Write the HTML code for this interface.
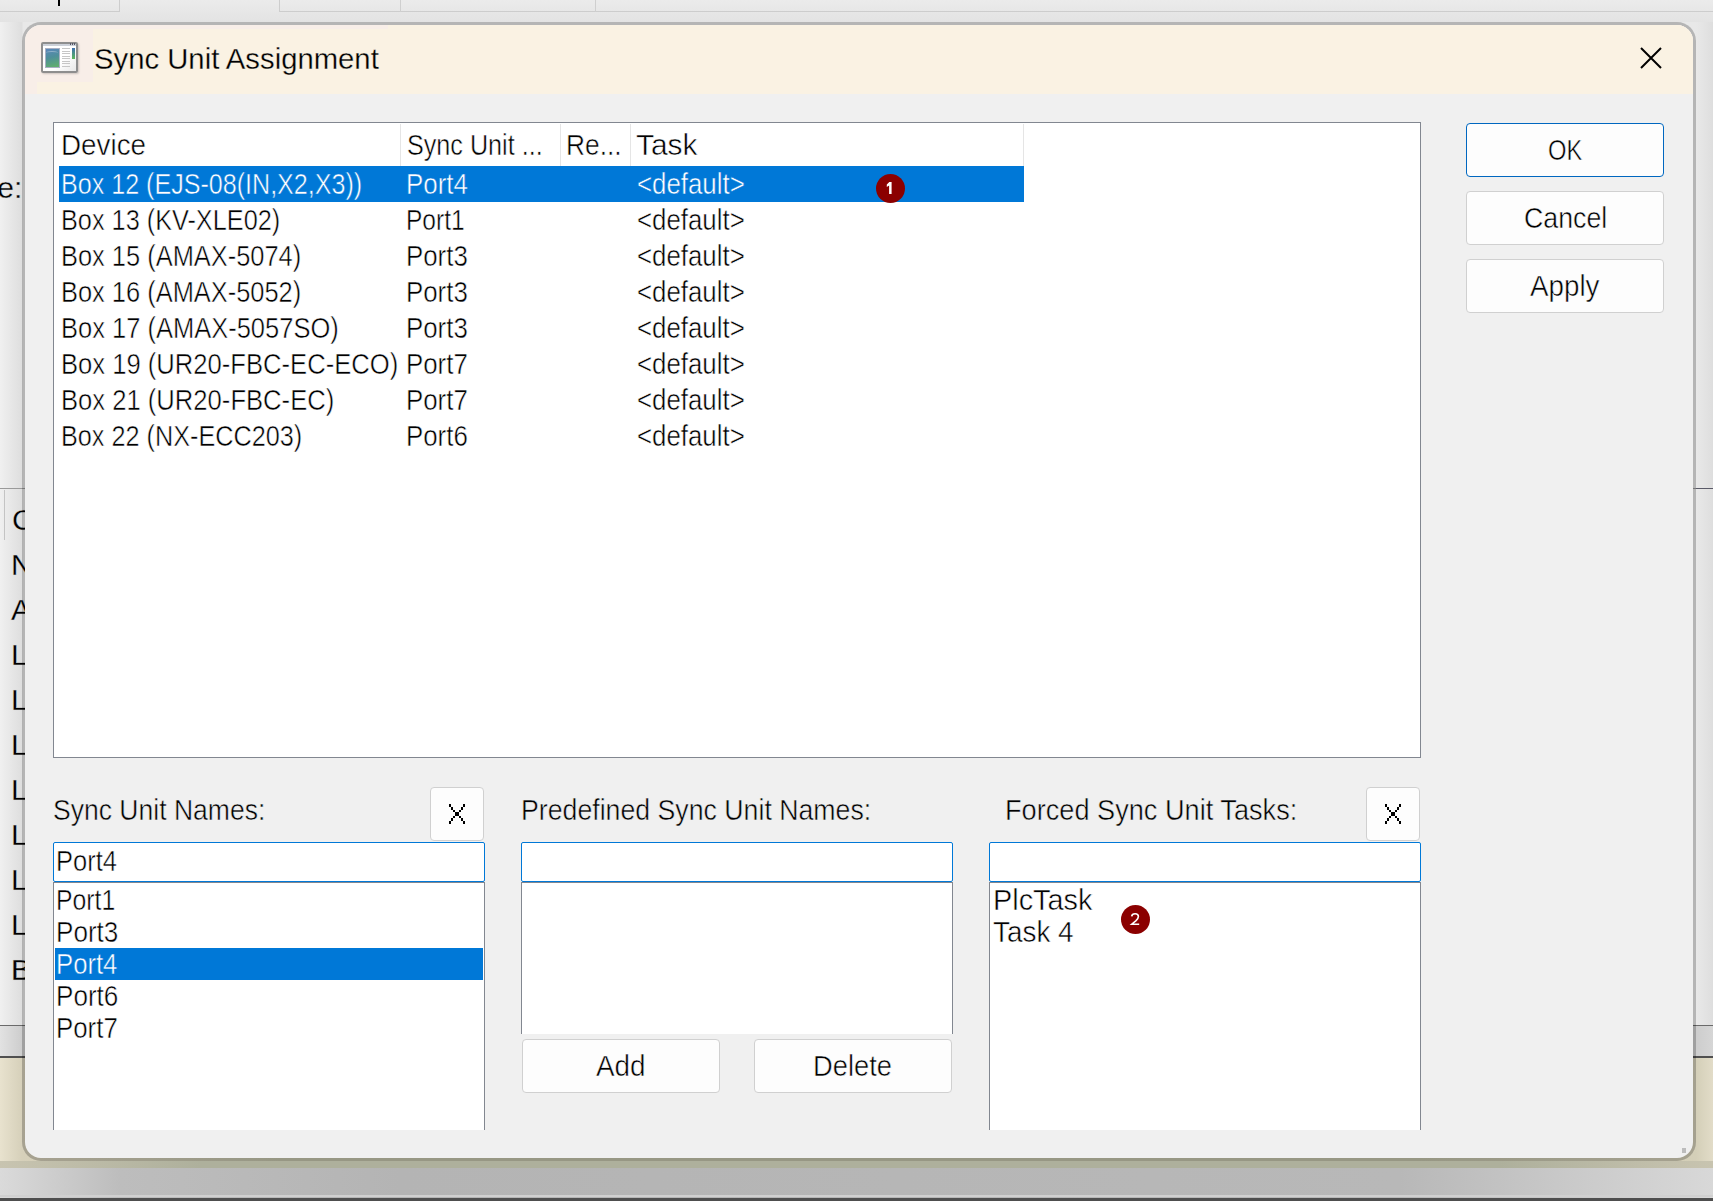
<!DOCTYPE html>
<html><head><meta charset="utf-8">
<style>
html,body{margin:0;padding:0}
body{width:1713px;height:1201px;overflow:hidden;position:relative;background:#e4e4e4;font-family:"Liberation Sans",sans-serif;color:#000}
.a{position:absolute;box-sizing:border-box}
.t{position:absolute;white-space:nowrap;font-size:29px;line-height:29px;transform-origin:0 0}
.t{-webkit-text-stroke:0.5px #fff}
.w{color:#fff;-webkit-text-stroke-color:#0078d7}
.g{-webkit-text-stroke-color:#f0f0f0}
.b{-webkit-text-stroke-color:#fdfdfd}
.cr{-webkit-text-stroke:0.3px #faf3e3}
.bg{-webkit-text-stroke:0.3px #dedede}
.btn{position:absolute;box-sizing:border-box;background:#fdfdfd;border:1px solid #d0d0d0;border-radius:4px}
.edit{position:absolute;box-sizing:border-box;background:#fff;border:1px solid #0078d7;border-radius:2px}
.lb{position:absolute;box-sizing:border-box;background:#fff;border:1px solid #828790;border-bottom:none}
.sel{position:absolute;background:#0078d7}
.sep{position:absolute;width:1px;background:#e5e5e5}
.badge{position:absolute;width:29px;height:29px;border-radius:50%;background:#8b0000}
</style></head><body>
<!-- background app -->
<div class="a" style="left:0;top:0;width:1713px;height:1201px;background:linear-gradient(90deg,#f0f0f0 0,#dedede 22px,#e8e8e8 23px,#e8e8e8 1696px,#e6e6e6 1700px,#dedede 1713px)"></div>
<div class="a" style="left:0;top:0;width:1713px;height:22px;background:linear-gradient(#ebebeb,#e3e3e3)"></div>
<div class="a" style="left:0;top:11px;width:120px;height:1px;background:#cdcdcd"></div>
<div class="a" style="left:279px;top:11px;width:1434px;height:1px;background:#cdcdcd"></div>
<div class="a" style="left:119px;top:0;width:1px;height:12px;background:#cdcdcd"></div>
<div class="a" style="left:279px;top:0;width:1px;height:12px;background:#cdcdcd"></div>
<div class="a" style="left:400px;top:0;width:1px;height:12px;background:#cfcfcf"></div>
<div class="a" style="left:595px;top:0;width:1px;height:12px;background:#cfcfcf"></div>
<div class="a" style="left:58px;top:0;width:2px;height:6px;background:#000"></div>
<div class="a" style="left:0;top:488px;width:1713px;height:1px;background:#9a9a9a"></div>
<div class="a" style="left:1696px;top:488px;width:17px;height:1px;background:#5a5a68"></div>
<div class="a" style="left:0;top:1025px;width:1713px;height:33px;background:linear-gradient(90deg,#e2e2e2,#cdcdcd 22px,#cdcdcd 1696px,#d6d6d6);border-top:1px solid #6a6a6a;border-bottom:2px solid #505050"></div>
<div class="a" style="left:0;top:1058px;width:1713px;height:110px;background:linear-gradient(90deg,#e8e2ce 0,#d6d0ba 22px,#c2c2aa 280px,#c2c2aa 1420px,#d4cfb8 1696px,#e2dcc8 1713px)"></div>
<div class="a" style="left:0;top:1161px;width:1713px;height:7px;background:linear-gradient(90deg,#c8c4b0,#aeb09c 200px,#aeb09c 1500px,#c8c4b0)"></div>
<div class="a" style="left:0;top:1168px;width:1713px;height:33px;background:linear-gradient(90deg,#dadada 0,#bdbdbd 120px,#b4b4b4 400px,#b8b8b8 1400px,#d8d8d8 1713px)"></div>
<div class="a" style="left:0;top:1195px;width:1713px;height:2px;background:#d0d0d0"></div>
<div class="a" style="left:0;top:1198px;width:1713px;height:3px;background:#4e4e4e"></div>

<div class="t bg" style="left:12px;top:505px;font-size:30px;line-height:30px">C</div>
<div class="t bg" style="left:11px;top:550px;font-size:30px;line-height:30px">N</div>
<div class="t bg" style="left:11px;top:595px;font-size:30px;line-height:30px">A</div>
<div class="t bg" style="left:11px;top:640px;font-size:30px;line-height:30px">L</div>
<div class="t bg" style="left:11px;top:685px;font-size:30px;line-height:30px">L</div>
<div class="t bg" style="left:11px;top:730px;font-size:30px;line-height:30px">L</div>
<div class="t bg" style="left:11px;top:775px;font-size:30px;line-height:30px">L</div>
<div class="t bg" style="left:11px;top:820px;font-size:30px;line-height:30px">L</div>
<div class="t bg" style="left:11px;top:865px;font-size:30px;line-height:30px">L</div>
<div class="t bg" style="left:11px;top:910px;font-size:30px;line-height:30px">L</div>
<div class="t bg" style="left:11px;top:955px;font-size:30px;line-height:30px">L</div>
<div class="t bg" style="left:11px;top:955px;font-size:30px;line-height:30px">B</div>
<div class="t bg" style="left:-2.7px;top:173px;font-size:30px;line-height:30px">e:</div>
<div class="a" style="left:4px;top:490px;width:1px;height:50px;background:#c4c4c4"></div>
<!-- dialog -->
<div class="a" style="left:22px;top:22px;width:1674px;height:1139px;border:3px solid rgba(0,0,0,0.22);background-clip:padding-box;border-radius:19px;background-color:#f0f0f0;overflow:hidden">
  <div class="a" style="left:0;top:0;width:1668px;height:69px;background:#f8eee8"></div>
  <div class="a" style="left:68px;top:4px;width:1600px;height:65px;background:#faf2e3"></div>
  <div class="a" style="left:363px;top:0;width:1305px;height:4px;background:#faf2e3"></div>
  <div class="a" style="left:12px;top:57px;width:60px;height:12px;background:#faf2e3"></div>
</div>

<!-- listview -->
<div class="a" style="left:53px;top:122px;width:1368px;height:636px;background:#fff;border:1px solid #828790"></div>
<div class="sep" style="left:400px;top:124px;height:42px"></div>
<div class="sep" style="left:560px;top:124px;height:42px"></div>
<div class="sep" style="left:630px;top:124px;height:42px"></div>
<div class="sep" style="left:1023px;top:124px;height:42px"></div>
<div class="sel" style="left:59px;top:166px;width:965px;height:36px"></div>
<div class="badge" style="left:876px;top:174px"></div>
<!-- right buttons -->
<div class="btn" style="left:1466px;top:123px;width:198px;height:54px;border-color:#0067c0"></div>
<div class="btn" style="left:1466px;top:191px;width:198px;height:54px"></div>
<div class="btn" style="left:1466px;top:259px;width:198px;height:54px"></div>
<!-- bottom groups -->
<div class="btn" style="left:430px;top:787px;width:54px;height:54px"></div>
<div class="edit" style="left:53px;top:842px;width:432px;height:40px"></div>
<div class="lb" style="left:53px;top:882px;width:432px;height:248px"></div>
<div class="sel" style="left:55px;top:948px;width:428px;height:32px"></div>

<div class="edit" style="left:521px;top:842px;width:432px;height:40px"></div>
<div class="lb" style="left:521px;top:882px;width:432px;height:152px"></div>
<div class="btn" style="left:522px;top:1039px;width:198px;height:54px"></div>
<div class="btn" style="left:754px;top:1039px;width:198px;height:54px"></div>

<div class="btn" style="left:1366px;top:787px;width:54px;height:54px"></div>
<div class="edit" style="left:989px;top:842px;width:432px;height:40px"></div>
<div class="lb" style="left:989px;top:882px;width:432px;height:248px"></div>
<div class="badge" style="left:1121px;top:905px"></div>

<!-- title -->
<div class="t cr" style="left:94px;top:44px;font-size:30px;line-height:30px;transform:scaleX(0.976)">Sync Unit Assignment</div>
<svg class="a" style="left:1636px;top:43px" width="30" height="30" viewBox="0 0 30 30"><path d="M5 5 L25 25 M25 5 L5 25" stroke="#000" stroke-width="2" fill="none"/></svg>
<!-- icon -->
<div class="a" style="left:41px;top:42px;width:37px;height:31px;border:2px solid #8e8e8e;border-radius:2px;background:linear-gradient(135deg,#fff 60%,#e8e8e8);box-shadow:1px 1px 2px rgba(0,0,0,.18)"></div>
<div class="a" style="left:43px;top:44px;width:33px;height:2px;background:#ccd0d8"></div>
<div class="a" style="left:70px;top:43px;width:6px;height:2px;background:repeating-linear-gradient(90deg,#556 0,#556 1.2px,transparent 1.2px,transparent 2px)"></div>
<div class="a" style="left:45px;top:48px;width:14.5px;height:20px;background:linear-gradient(165deg,#5b86bb 0%,#4e8f9a 45%,#62b16a 100%);border:1px solid #a9b0c4"></div>
<div class="a" style="left:46px;top:51px;width:12px;height:4px;border-top:1px solid rgba(255,255,255,.35);border-radius:50% 50% 0 0"></div>
<div class="a" style="left:62px;top:48px;width:8px;height:20px;background:repeating-linear-gradient(#c6c6c6 0,#c6c6c6 1px,transparent 1px,transparent 2.5px)"></div>
<div class="a" style="left:72px;top:48px;width:3px;height:11px;background:linear-gradient(#3e6fb0,#5cb85c)"></div>
<!-- X glyphs -->
<svg class="a" style="left:449px;top:804px" width="16" height="20" viewBox="0 0 16 20"><path d="M1 0V3M3 3V6M5 6V8M7 8V12M9 8V12M11 6V8M13 3V6M15 0V3M5 12V14M3 14V17M1 17V20M11 12V14M13 14V17M15 17V20" stroke="#000" stroke-width="2" fill="none"/></svg>
<svg class="a" style="left:1385px;top:804px" width="16" height="20" viewBox="0 0 16 20"><path d="M1 0V3M3 3V6M5 6V8M7 8V12M9 8V12M11 6V8M13 3V6M15 0V3M5 12V14M3 14V17M1 17V20M11 12V14M13 14V17M15 17V20" stroke="#000" stroke-width="2" fill="none"/></svg>
<!-- badge digits -->
<svg class="a" style="left:0;top:0" width="1713" height="1201" viewBox="0 0 1713 1201">
<path d="M886.8 184.6 L889.3 182 H891.6 V194 H889.1 V185.6 L886.8 186.9 Z" fill="#fff"/>
<path d="M1131.7 916.3 Q1132 913.7 1135.1 913.7 Q1138.4 913.7 1138.4 916.6 Q1138.4 918.6 1135.8 920.9 L1131.8 924.2 H1139.2" stroke="#fff" stroke-width="1.6" fill="none"/>
</svg>
<div class="a" style="left:1682px;top:1148px;width:4px;height:5px;background:#bcbcbc"></div>
<div class="t " style="left:61.08px;top:131px;transform:scaleX(0.9589)">Device</div>
<div class="t " style="left:407.13px;top:131px;transform:scaleX(0.8677)">Sync Unit ...</div>
<div class="t " style="left:566.18px;top:131px;transform:scaleX(0.9093)">Re...</div>
<div class="t " style="left:636.00px;top:131px;transform:scaleX(1.0311)">Task</div>
<div class="t w" style="left:61.27px;top:170px;transform:scaleX(0.8651)">Box 12 (EJS-08(IN,X2,X3))</div>
<div class="t w" style="left:406.21px;top:170px;transform:scaleX(0.8930)">Port4</div>
<div class="t w" style="left:637.11px;top:170px;transform:scaleX(0.8907)">&lt;default&gt;</div>
<div class="t " style="left:61.26px;top:206px;transform:scaleX(0.8716)">Box 13 (KV-XLE02)</div>
<div class="t " style="left:406.31px;top:206px;transform:scaleX(0.8461)">Port1</div>
<div class="t " style="left:637.11px;top:206px;transform:scaleX(0.8907)">&lt;default&gt;</div>
<div class="t " style="left:61.25px;top:242px;transform:scaleX(0.8766)">Box 15 (AMAX-5074)</div>
<div class="t " style="left:406.22px;top:242px;transform:scaleX(0.8914)">Port3</div>
<div class="t " style="left:637.11px;top:242px;transform:scaleX(0.8907)">&lt;default&gt;</div>
<div class="t " style="left:61.25px;top:278px;transform:scaleX(0.8766)">Box 16 (AMAX-5052)</div>
<div class="t " style="left:406.22px;top:278px;transform:scaleX(0.8914)">Port3</div>
<div class="t " style="left:637.11px;top:278px;transform:scaleX(0.8907)">&lt;default&gt;</div>
<div class="t " style="left:61.24px;top:314px;transform:scaleX(0.8791)">Box 17 (AMAX-5057SO)</div>
<div class="t " style="left:406.22px;top:314px;transform:scaleX(0.8914)">Port3</div>
<div class="t " style="left:637.11px;top:314px;transform:scaleX(0.8907)">&lt;default&gt;</div>
<div class="t " style="left:61.23px;top:350px;transform:scaleX(0.8830)">Box 19 (UR20-FBC-EC-ECO)</div>
<div class="t " style="left:406.22px;top:350px;transform:scaleX(0.8914)">Port7</div>
<div class="t " style="left:637.11px;top:350px;transform:scaleX(0.8907)">&lt;default&gt;</div>
<div class="t " style="left:61.23px;top:386px;transform:scaleX(0.8831)">Box 21 (UR20-FBC-EC)</div>
<div class="t " style="left:406.22px;top:386px;transform:scaleX(0.8914)">Port7</div>
<div class="t " style="left:637.11px;top:386px;transform:scaleX(0.8907)">&lt;default&gt;</div>
<div class="t " style="left:61.26px;top:422px;transform:scaleX(0.8700)">Box 22 (NX-ECC203)</div>
<div class="t " style="left:406.22px;top:422px;transform:scaleX(0.8914)">Port6</div>
<div class="t " style="left:637.11px;top:422px;transform:scaleX(0.8907)">&lt;default&gt;</div>
<div class="t g" style="left:53.09px;top:796px;transform:scaleX(0.9148)">Sync Unit Names:</div>
<div class="t g" style="left:521.16px;top:796px;transform:scaleX(0.9207)">Predefined Sync Unit Names:</div>
<div class="t g" style="left:1005.13px;top:796px;transform:scaleX(0.9365)">Forced Sync Unit Tasks:</div>
<div class="t " style="left:56.24px;top:847px;transform:scaleX(0.8782)">Port4</div>
<div class="t " style="left:56.29px;top:886px;transform:scaleX(0.8537)">Port1</div>
<div class="t " style="left:56.20px;top:918px;transform:scaleX(0.8990)">Port3</div>
<div class="t w" style="left:56.23px;top:950px;transform:scaleX(0.8856)">Port4</div>
<div class="t " style="left:56.20px;top:982px;transform:scaleX(0.8990)">Port6</div>
<div class="t " style="left:56.22px;top:1014px;transform:scaleX(0.8914)">Port7</div>
<div class="t " style="left:993.01px;top:886px;transform:scaleX(0.9958)">PlcTask</div>
<div class="t " style="left:993.00px;top:918px;transform:scaleX(0.9619)">Task 4</div>
<div class="t b" style="left:1548.18px;top:136px;transform:scaleX(0.8182)">OK</div>
<div class="t b" style="left:1524.08px;top:204px;transform:scaleX(0.9223)">Cancel</div>
<div class="t b" style="left:1530.00px;top:272px;transform:scaleX(0.9583)">Apply</div>
<div class="t b" style="left:596.00px;top:1052px;transform:scaleX(0.9609)">Add</div>
<div class="t b" style="left:813.12px;top:1052px;transform:scaleX(0.9418)">Delete</div>


</body></html>
